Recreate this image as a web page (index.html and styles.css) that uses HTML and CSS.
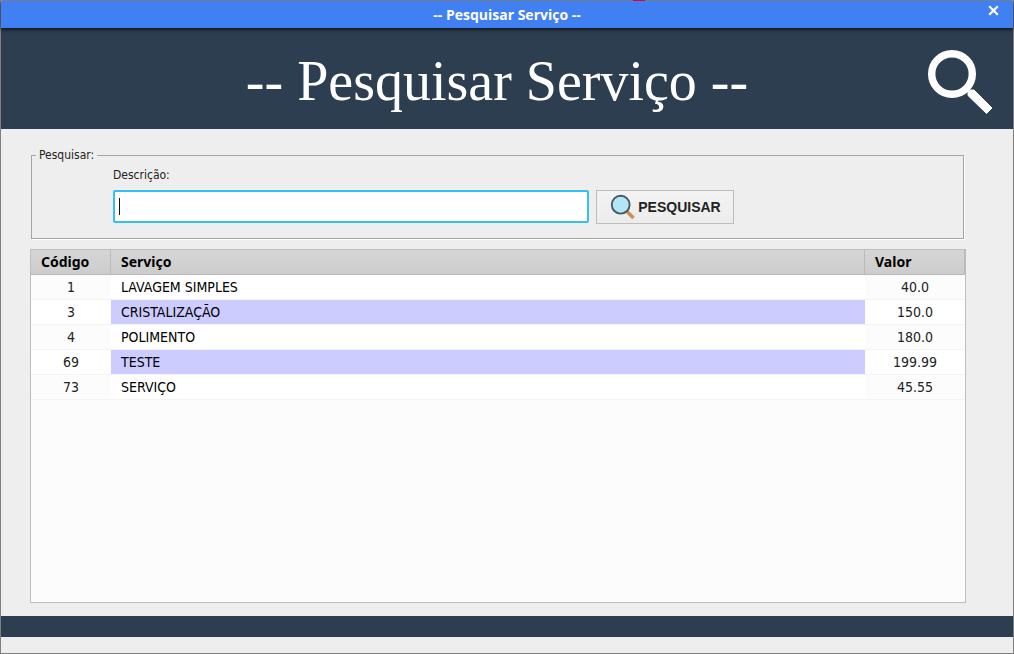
FILE: index.html
```html
<!DOCTYPE html>
<html lang="pt-BR">
<head>
<meta charset="utf-8">
<meta name="viewport" content="width=device-width, initial-scale=1">
<title>Pesquisar Serviço</title>
<link rel="stylesheet" href="styles.css">
</head>
<body>
<div class="window">
  <div class="titlebar">
    <span class="titlebar-text">-- Pesquisar Serviço --</span>
    <span class="marker"></span>
    <button class="close" type="button" aria-label="Fechar">
      <svg width="11" height="11" viewBox="0 0 11 11"><path d="M1.2 1.2 9.8 9.8M9.8 1.2 1.2 9.8" stroke="#fff" stroke-width="2.2" fill="none"/></svg>
    </button>
  </div>
  <header class="banner">
    <h1 class="banner-title">-- Pesquisar Serviço --</h1>
    <svg class="banner-icon" width="66" height="66" viewBox="0 0 66 66" aria-hidden="true">
      <circle cx="25" cy="25" r="20.3" fill="none" stroke="#fff" stroke-width="7.400"/>
      <path d="M41 41V46.500L59.500 64.500 65 59 47 41Z M38 38 43 42" fill="#fff" stroke="#fff" stroke-width="1"/>
    </svg>
  </header>
  <main class="content">
    <fieldset class="search">
      <legend>Pesquisar:</legend>
      <label class="field-label" for="descricao">Descrição:</label>
      <div class="search-row">
        <input class="field" id="descricao" type="text">
        <button class="search-button" type="button">
          <svg width="26" height="26" viewBox="0 0 26 26" aria-hidden="true">
            <path d="M17.500 17 24.500 24" stroke="#c9924f" stroke-width="3.600"/>
            <circle cx="11.700" cy="10.700" r="8.900" fill="#b3e5f7" stroke="#455a64" stroke-width="1.900"/>
          </svg>
          <span>PESQUISAR</span>
        </button>
      </div>
    </fieldset>
    <div class="table-pane">
      <table class="services">
        <thead>
          <tr><th class="code" scope="col">Código</th><th scope="col">Serviço</th><th class="value" scope="col">Valor</th></tr>
        </thead>
        <tbody>
          <tr><td>1</td><td>LAVAGEM SIMPLES</td><td>40.0</td></tr>
          <tr><td>3</td><td>CRISTALIZAÇÃO</td><td>150.0</td></tr>
          <tr><td>4</td><td>POLIMENTO</td><td>180.0</td></tr>
          <tr><td>69</td><td>TESTE</td><td>199.99</td></tr>
          <tr><td>73</td><td>SERVIÇO</td><td>45.55</td></tr>
        </tbody>
      </table>
    </div>
  </main>
  <footer class="footer"></footer>
</div>
</body>
</html>
```
FILE: styles.css
```css
* { box-sizing: border-box; }

body {
  margin: 0;
  background: #eeeeee;
  font-family: "DejaVu Sans Condensed", "DejaVu Sans", sans-serif;
  color: #222;
}

.window {
  display: flex;
  flex-direction: column;
  min-height: 100vh;
  padding-bottom: 16px;
  border: 1px solid #7f7f7f;
  border-top-color: #94a0b0;
}

.titlebar {
  position: relative;
  z-index: 1;
  display: flex;
  justify-content: center;
  height: 27px;
  background: #4080f2;
  box-shadow: 0 1px 4px rgba(0, 0, 0, 0.9);
}

.titlebar-text {
  color: #fff;
  font: bold 14px/28px "Open Sans", sans-serif;
}

.marker {
  position: absolute;
  top: -1px;
  left: calc(50% + 126px);
  width: 12px;
  height: 1px;
  background: #e00030;
}

.close {
  position: absolute;
  top: 4px;
  right: 14px;
  display: flex;
  padding: 0;
  border: 0;
  background: none;
}

.banner {
  display: flex;
  align-items: center;
  height: 101px;
  padding: 0 20px 0 66px;
  background: #2d3e50;
}

.banner-title {
  flex: 1;
  margin: 0;
  padding-top: 4px;
  color: #fff;
  font: 56px/64px "Liberation Serif", serif;
  text-align: center;
  white-space: nowrap;
}

.banner-icon { margin-top: 6px; }

.content {
  flex: 1;
  display: flex;
  flex-direction: column;
  gap: 10px;
  padding: 19px 47px 13px 29px;
}

.search {
  min-width: 0;
  margin: 0 2px 0 1px;
  padding: 5px 8px 14px 81px;
  border: 1px solid #a5a5a5;
  box-shadow: 1px 1px 0 #fff;
  font-size: 12px;
  line-height: 16px;
}

.search legend {
  margin-left: -77px;
  padding: 0 3px;
  line-height: 14px;
}

.field-label {
  display: block;
  margin-bottom: 7px;
}

.search-row { display: flex; gap: 7px; }

.field {
  flex: 0 1 476px;
  min-width: 0;
  height: 33px;
  padding: 0 6px;
  border: 2px solid #33c1f5;
  border-radius: 2px;
  outline: 0;
  background: linear-gradient(#111, #111) 4px 6px / 1px 17px no-repeat #fff;
  font: 14px "DejaVu Sans Condensed", sans-serif;
}

.search-button {
  display: flex;
  align-items: center;
  justify-content: center;
  gap: 3px;
  width: 138px;
  height: 34px;
  padding: 0;
  border: 1px solid #bdbdbd;
  background: linear-gradient(#f3f3f3, #ececec);
  color: #222;
  font: bold 14px "Liberation Sans", sans-serif;
}

.table-pane {
  flex: 1;
  border: 1px solid #bdbdbd;
  background: #fcfcfc;
}

.services {
  width: 100%;
  border-collapse: separate;
  border-spacing: 0;
  table-layout: fixed;
  font-size: 14px;
  line-height: 24px;
}

.services th {
  height: 25px;
  padding: 0 10px;
  border-right: 1px solid #bababa;
  border-bottom: 1px solid #bababa;
  background: linear-gradient(#d6d6d6, #cccccc);
  color: #000;
  font-family: "Noto Sans", sans-serif;
  text-align: left;
}

.services .code { width: 80px; }
.services .value { width: 100px; }

.services td {
  height: 25px;
  padding: 0 10px;
  border-bottom: 1px solid #f3f3f3;
  text-align: center;
}

.services td:nth-child(2) {
  background: #fff;
  color: #000;
  text-align: left;
}

.services tr:nth-child(even) td { background: #fff; }
.services tr:nth-child(even) td:nth-child(2) { background: #ccccff; }

.footer { height: 21px; background: #2d3e50; }
```
